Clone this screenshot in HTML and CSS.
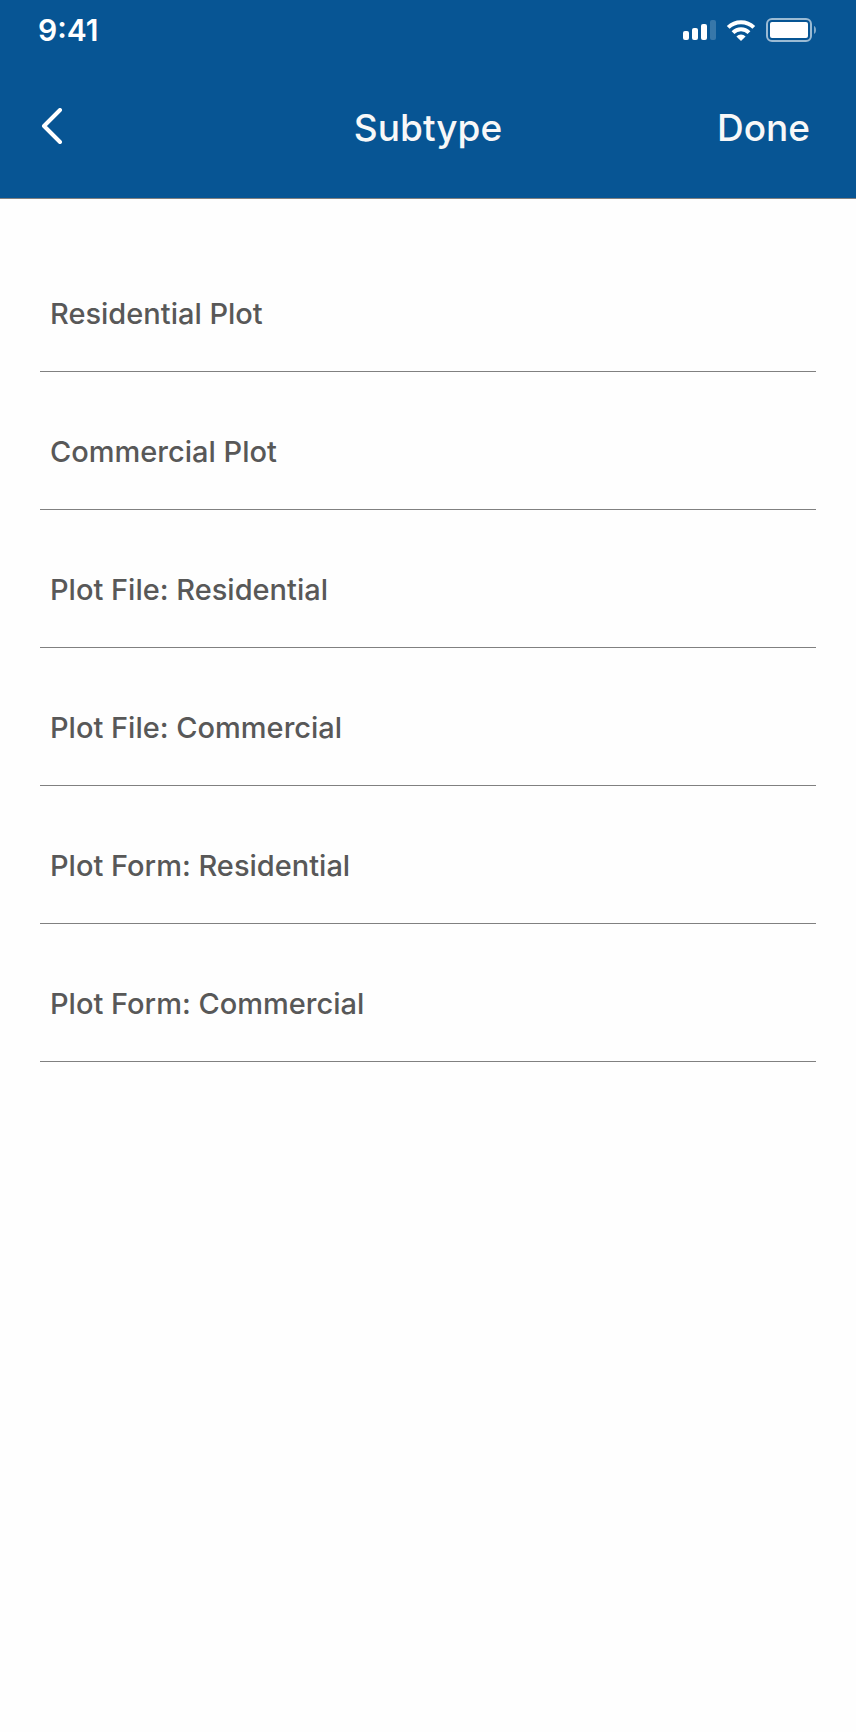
FILE: index.html
```html
<!DOCTYPE html>
<html lang="en">
<head>
  <meta charset="UTF-8" />
  <meta name="viewport" content="width=device-width, initial-scale=1.0"/>
  <title>Subtype</title>
  <link rel="stylesheet" href="styles.css">
</head>
<body>
  <header class="header">
    <div class="status-bar">
      <span class="time">9:41</span>
      <div class="status-icons">
        <svg class="signal" width="33" height="20" viewBox="0 0 33 20" fill="#fff">
          <rect x="0" y="11" width="6" height="9" rx="2"/>
          <rect x="9" y="8" width="6" height="12" rx="2"/>
          <rect x="18" y="4" width="6" height="16" rx="2"/>
          <rect x="27" y="0" width="6" height="20" rx="2" opacity="0.2"/>
        </svg>
        <svg class="wifi" width="30" height="21" viewBox="0 0 30 21" fill="none" stroke="#fff" stroke-width="4">
          <path d="M2.2 7.4a18.3 18.3 0 0 1 25.6 0"/>
          <path d="M7 12.6a11.500 11.500 0 0 1 16 0"/>
          <path d="M15 21l-4.600-4.600a6.600 6.600 0 0 1 9.200 0z" fill="#fff" stroke="none"/>
        </svg>
        <svg class="battery" width="50" height="24" viewBox="0 0 50 24">
          <rect x="1" y="1" width="44" height="22" rx="5" fill="none" stroke="#fff" stroke-width="2" opacity="0.6"/>
          <rect x="4" y="4" width="38" height="16" rx="2" fill="#fff"/>
          <path d="M48 8c1.4.6 2 2.200 2 4s-.6 3.400-2 4z" fill="#fff" opacity="0.5"/>
        </svg>
      </div>
    </div>
    <nav class="nav-bar">
      <button class="back-btn" type="button" aria-label="Back">
        <svg width="24" height="38" viewBox="0 0 24 38" fill="none" stroke="#fff" stroke-width="4" stroke-linecap="round" stroke-linejoin="round">
          <path d="M20 2L4 18l16 16"/>
        </svg>
      </button>
      <h1>Subtype</h1>
      <button class="done-btn" type="button">Done</button>
    </nav>
  </header>

  <main>
    <ul class="subtype-list">
      <li><button type="button">Residential Plot</button></li>
      <li><button type="button">Commercial Plot</button></li>
      <li><button type="button">Plot File: Residential</button></li>
      <li><button type="button">Plot File: Commercial</button></li>
      <li><button type="button">Plot Form: Residential</button></li>
      <li><button type="button">Plot Form: Commercial</button></li>
    </ul>
  </main>
</body>
</html>
```
FILE: styles.css
```css
:root {
  --primary-color: #075594;
  --text-color: #585858;
  --line-color: #808080;
}
* { box-sizing: border-box; }
body {
  margin: 0;
  font-family: Inter, "Open Sans", sans-serif;
  background-color: #fefefe;
  color: var(--text-color);
}
button {
  border: 0; padding: 0;
  background: none;
  font-family: inherit;
  font-weight: 500;
  color: inherit;
  cursor: pointer;
}
svg { display: block; }
.header {
  background-color: var(--primary-color);
  border-bottom: 1px solid var(--line-color);
  color: #f8f8f8;
}
.status-bar {
  display: flex;
  justify-content: space-between;
  align-items: center;
  height: 60px;
  padding: 0 40px 0 38px;
}
.time {
  color: #fff;
  font-size: 30px;
  line-height: 36px;
  font-weight: 600;
}
.status-icons {
  display: flex;
  align-items: center;
  gap: 10px;
}
.nav-bar {
  display: grid;
  grid-template-columns: 1fr auto 1fr;
  align-items: center;
  height: 138px;
  padding: 0 40px 4px;
}
.nav-bar h1 {
  margin: 0;
  font-size: 37px;
  font-weight: 500;
}
.back-btn { justify-self: start; }
.done-btn {
  justify-self: end;
  padding-right: 6px;
  font-size: 37px;
}
.subtype-list {
  list-style: none;
  margin: 0;
  padding: 35px 40px;
}
.subtype-list li { border-bottom: 1px solid var(--line-color); }
.subtype-list button {
  display: block;
  width: 100%;
  padding: 62px 10px 39px;
  font-size: 29px;
  line-height: 36px;
  text-align: left;
}
```
